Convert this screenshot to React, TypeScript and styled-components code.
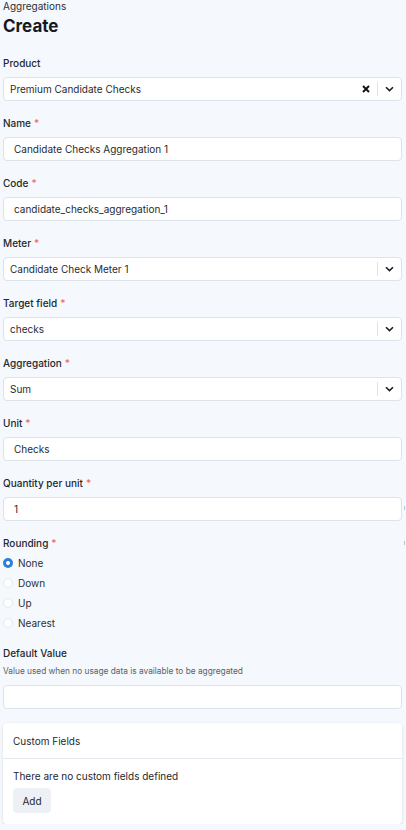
import React from "react";
import styled, { createGlobalStyle } from "styled-components";

const Global = createGlobalStyle`
  html, body { margin: 0; padding: 0; background: #f5f8fc; }
  body { font-family: Inter, "Noto Sans", "Liberation Sans", sans-serif; color: #1e2228; }
  * { box-sizing: border-box; }
`;

const Page = styled.div`
  padding: 0 4px 0 3px;
  display: flex;
  flex-direction: column;
`;

const Breadcrumb = styled.div`
  font-size: 10px;
  line-height: 12px;
  color: #2a2f36;
`;

const Title = styled.h1`
  margin: 4px 0 20px;
  font-size: 17px;
  line-height: 20px;
  font-weight: 700;
  color: #15191e;
`;

const Form = styled.div`
  display: flex;
  flex-direction: column;
  gap: 15px;
`;

const Field = styled.div<{ $gap?: number }>`
  position: relative;
  display: flex;
  flex-direction: column;
  gap: ${(p) => (p.$gap ?? 7)}px;
`;

const Label = styled.label`
  font-size: 10px;
  line-height: 14px;
  font-weight: 450;
  color: #23282f;
`;

const Req = styled.span`
  color: #ef6a6a;
  margin-left: 3px;
`;

const Hint = styled.div`
  font-size: 8.3px;
  line-height: 12px;
  color: #5b6169;
  margin: -2px 0 1px;
`;

const Box = styled.div`
  position: relative;
  height: 24px;
  background: #fff;
  border: 1px solid #dde3eb;
  border-radius: 4px;
  display: flex;
  align-items: center;
`;

const InputText = styled.span`
  flex: 1;
  padding-left: 10px;
  font-size: 10px;
  color: #262b31;
  white-space: nowrap;
`;

const SelectText = styled(InputText)`
  padding-left: 6px;
`;

const Indicators = styled.div`
  display: flex;
  align-items: center;
  height: 100%;
`;

const ClearBtn = styled.span`
  width: 16px;
  display: flex;
  justify-content: center;
  margin-right: 3px;
`;

const Sep = styled.span`
  width: 1px;
  height: 14px;
  background: #dde3eb;
`;

const Caret = styled.span`
  width: 23px;
  display: flex;
  justify-content: center;
`;

const Peek = styled.span<{ $top: number }>`
  position: absolute;
  right: -3px;
  top: ${(p) => p.$top}px;
  width: 1px;
  height: 4px;
  background: #a4cbea;
`;

const RadioList = styled.div`
  display: flex;
  flex-direction: column;
  margin-bottom: -2px;
`;

const RadioRow = styled.div`
  height: 20px;
  display: flex;
  align-items: center;
  gap: 5px;
  font-size: 10px;
  color: #2a2f36;
`;

const RadioDot = styled.span<{ $on?: boolean }>`
  width: 10px;
  height: 10px;
  border-radius: 50%;
  background: ${(p) => (p.$on ? "#2f7fd8" : "#fff")};
  border: ${(p) => (p.$on ? "none" : "1px solid #e3e7ed")};
  display: flex;
  align-items: center;
  justify-content: center;
  &::after {
    content: "";
    width: 4px;
    height: 4px;
    border-radius: 50%;
    background: #fff;
    display: ${(p) => (p.$on ? "block" : "none")};
  }
`;

const Card = styled.div`
  margin-top: -1px;
  background: #fff;
  border-radius: 4px;
  box-shadow: 0 1px 3px rgba(30, 40, 60, 0.14);
  display: flex;
  flex-direction: column;
`;

const CardHeader = styled.div`
  height: 36px;
  padding: 0 10px;
  display: flex;
  align-items: center;
  font-size: 10px;
  color: #23282f;
  border-bottom: 1px solid #e3e7ee;
`;

const CardBody = styled.div`
  padding: 10px 10px 11px;
  display: flex;
  flex-direction: column;
  align-items: flex-start;
  gap: 5px;
`;

const BodyText = styled.div`
  font-size: 10px;
  line-height: 14px;
  color: #23282f;
`;

const Button = styled.button`
  height: 25px;
  width: 38px;
  border: none;
  border-radius: 4px;
  background: #edf1f6;
  font-family: inherit;
  font-size: 10px;
  color: #23282f;
  padding: 0;
`;

const Chevron = () => (
  <svg width="9" height="6" viewBox="0 0 9 6">
    <path d="M1 1.2 L4.5 4.6 L8 1.2" fill="none" stroke="#1b1f24" strokeWidth="1.6" />
  </svg>
);

const XIcon = () => (
  <svg width="8" height="8" viewBox="0 0 8 8">
    <path d="M1 1 L7 7 M7 1 L1 7" fill="none" stroke="#111" strokeWidth="1.9" />
  </svg>
);

const Req1 = () => <Req>*</Req>;

const TextInput = ({ value }: { value: string }) => (
  <Box>
    <InputText>{value}</InputText>
  </Box>
);

const Select = ({ value, clearable }: { value: string; clearable?: boolean }) => (
  <Box>
    <SelectText>{value}</SelectText>
    <Indicators>
      {clearable && (
        <ClearBtn>
          <XIcon />
        </ClearBtn>
      )}
      <Sep />
      <Caret>
        <Chevron />
      </Caret>
    </Indicators>
  </Box>
);

export default function App() {
  return (
    <>
      <Global />
      <Page>
        <Breadcrumb>Aggregations</Breadcrumb>
        <Title>Create</Title>
        <Form>
          <Field>
            <Label>Product</Label>
            <Select value="Premium Candidate Checks" clearable />
          </Field>
          <Field>
            <Label>
              Name<Req1 />
            </Label>
            <TextInput value="Candidate Checks Aggregation 1" />
          </Field>
          <Field>
            <Label>
              Code<Req1 />
            </Label>
            <TextInput value="candidate_checks_aggregation_1" />
          </Field>
          <Field>
            <Label>
              Meter<Req1 />
            </Label>
            <Select value="Candidate Check Meter 1" />
          </Field>
          <Field>
            <Label>
              Target field<Req1 />
            </Label>
            <Select value="checks" />
          </Field>
          <Field>
            <Label>
              Aggregation<Req1 />
            </Label>
            <Select value="Sum" />
          </Field>
          <Field>
            <Label>
              Unit<Req1 />
            </Label>
            <TextInput value="Checks" />
          </Field>
          <Field>
            <Label>
              Quantity per unit<Req1 />
            </Label>
            <TextInput value="1" />
            <Peek $top={30} />
          </Field>
          <Field $gap={3}>
            <Label>
              Rounding<Req1 />
            </Label>
            <Peek $top={5} />
            <RadioList>
              <RadioRow>
                <RadioDot $on />
                None
              </RadioRow>
              <RadioRow>
                <RadioDot />
                Down
              </RadioRow>
              <RadioRow>
                <RadioDot />
                Up
              </RadioRow>
              <RadioRow>
                <RadioDot />
                Nearest
              </RadioRow>
            </RadioList>
          </Field>
          <Field>
            <Label>Default Value</Label>
            <Hint>Value used when no usage data is available to be aggregated</Hint>
            <TextInput value="" />
          </Field>
          <Card>
            <CardHeader>Custom Fields</CardHeader>
            <CardBody>
              <BodyText>There are no custom fields defined</BodyText>
              <Button>Add</Button>
            </CardBody>
          </Card>
        </Form>
      </Page>
    </>
  );
}
